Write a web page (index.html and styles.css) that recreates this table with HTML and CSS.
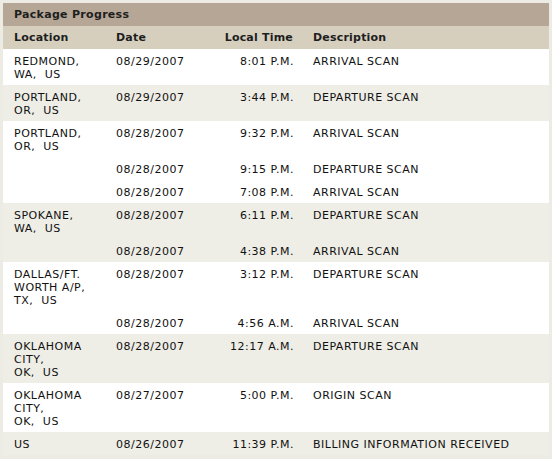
FILE: index.html
```html
<!DOCTYPE html>
<html>
<head>
<meta charset="utf-8">
<link rel="stylesheet" href="styles.css">
</head>
<body>
<div class="frame">
<table class="progress">
  <colgroup>
    <col class="c-loc"><col class="c-date"><col class="c-time"><col class="c-desc">
  </colgroup>
  <thead>
    <tr class="title"><th colspan="4">Package Progress</th></tr>
    <tr class="head">
      <th class="loc">Location</th><th>Date</th><th class="time">Local Time</th><th>Description</th>
    </tr>
  </thead>
  <tbody class="odd">
    <tr><td class="loc">REDMOND,<br>WA,&nbsp; US</td><td>08/29/2007</td><td class="time">8:01 P.M.</td><td>ARRIVAL SCAN</td></tr>
  </tbody>
  <tbody class="even">
    <tr><td class="loc">PORTLAND,<br>OR,&nbsp; US</td><td>08/29/2007</td><td class="time">3:44 P.M.</td><td>DEPARTURE SCAN</td></tr>
  </tbody>
  <tbody class="odd">
    <tr><td class="loc">PORTLAND,<br>OR,&nbsp; US</td><td>08/28/2007</td><td class="time">9:32 P.M.</td><td>ARRIVAL SCAN</td></tr>
    <tr><td class="loc"></td><td>08/28/2007</td><td class="time">9:15 P.M.</td><td>DEPARTURE SCAN</td></tr>
    <tr><td class="loc"></td><td>08/28/2007</td><td class="time">7:08 P.M.</td><td>ARRIVAL SCAN</td></tr>
  </tbody>
  <tbody class="even">
    <tr><td class="loc">SPOKANE,<br>WA,&nbsp; US</td><td>08/28/2007</td><td class="time">6:11 P.M.</td><td>DEPARTURE SCAN</td></tr>
    <tr><td class="loc"></td><td>08/28/2007</td><td class="time">4:38 P.M.</td><td>ARRIVAL SCAN</td></tr>
  </tbody>
  <tbody class="odd">
    <tr><td class="loc">DALLAS/FT.<br>WORTH A/P,<br>TX,&nbsp; US</td><td>08/28/2007</td><td class="time">3:12 P.M.</td><td>DEPARTURE SCAN</td></tr>
    <tr><td class="loc"></td><td>08/28/2007</td><td class="time">4:56 A.M.</td><td>ARRIVAL SCAN</td></tr>
  </tbody>
  <tbody class="even">
    <tr><td class="loc">OKLAHOMA<br>CITY,<br>OK,&nbsp; US</td><td>08/28/2007</td><td class="time">12:17 A.M.</td><td>DEPARTURE SCAN</td></tr>
  </tbody>
  <tbody class="odd">
    <tr><td class="loc">OKLAHOMA<br>CITY,<br>OK,&nbsp; US</td><td>08/27/2007</td><td class="time">5:00 P.M.</td><td>ORIGIN SCAN</td></tr>
  </tbody>
  <tbody class="even">
    <tr><td class="loc">US</td><td>08/26/2007</td><td class="time">11:39 P.M.</td><td>BILLING INFORMATION RECEIVED</td></tr>
  </tbody>
</table>
</div>
</body>
</html>
```
FILE: styles.css
```css
html, body {
  margin: 0;
  padding: 0;
}
body {
  background: #ecebe4;
  font-family: "DejaVu Sans", Verdana, sans-serif;
  font-size: 11px;
  color: #000;
}
.frame {
  padding: 3px;
}
.progress {
  width: 546px;
  border-collapse: collapse;
  border-spacing: 0;
  table-layout: fixed;
  line-height: 13px;
}
.c-loc { width: 102px; }
.c-date { width: 95px; }
.c-time { width: 102px; }
.c-desc { width: 247px; }

.progress th,
.progress td {
  padding: 5px 9px 5px 11px;
  text-align: left;
  vertical-align: top;
}
.progress td {
  padding-top: 6px;
  padding-bottom: 4px;
  letter-spacing: 0.5px;
  color: #111;
}
.progress .loc {
  padding-right: 12px;
}
.progress .time {
  text-align: right;
}
.progress td.time {
  padding-right: 8px;
}
.title th {
  background: #b5a696;
  color: #1e1e1e;
  font-weight: bold;
  letter-spacing: 0.3px;
}
.head th {
  background: #d6cfbe;
  color: #1e1e1e;
  font-weight: bold;
  letter-spacing: 0.2px;
}
.odd td {
  background: #ffffff;
}
.even td {
  background: #eeede6;
}
```
